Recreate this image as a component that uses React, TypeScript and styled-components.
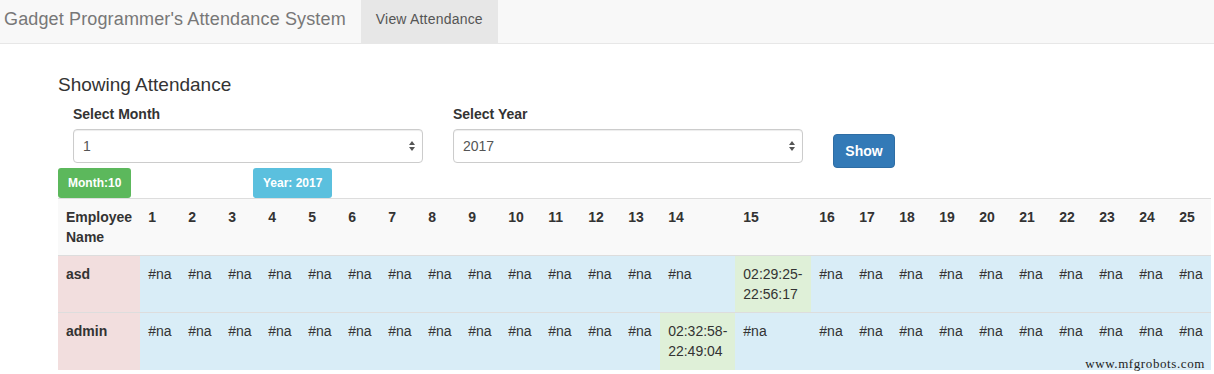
import React from "react";
import styled, { createGlobalStyle } from "styled-components";

const GlobalStyle = createGlobalStyle`
  html, body {
    margin: 0;
    padding: 0;
    background: #fff;
    overflow: hidden;
  }
  body {
    font-family: "Liberation Sans", Helvetica, Arial, sans-serif;
    font-size: 14px;
    line-height: 20px;
    color: #333;
  }
  * { box-sizing: border-box; }
`;

const Page = styled.div`
  position: relative;
  width: 1214px;
  height: 374px;
  overflow: hidden;
`;

const Navbar = styled.nav`
  display: flex;
  height: 44px;
  background: #f8f8f8;
  border-bottom: 1px solid #e7e7e7;
`;

const Brand = styled.div`
  height: 43px;
  line-height: 39px;
  padding: 0 15px 0 4px;
  font-size: 18px;
  letter-spacing: 0.14px;
  color: #777;
  white-space: nowrap;
`;

const NavItem = styled.div<{ $active?: boolean }>`
  height: 43px;
  line-height: 39px;
  padding: 0 15px;
  font-size: 14px;
  letter-spacing: 0.2px;
  color: #555;
  background: ${(p) => (p.$active ? "#e7e7e7" : "transparent")};
`;

const Main = styled.main`
  padding: 31px 3px 0 58px;
`;

const Heading = styled.h4`
  margin: 0;
  font-size: 19px;
  line-height: 20px;
  font-weight: 500;
  color: #333;
`;

const FormRow = styled.div`
  display: flex;
  align-items: flex-start;
  margin-top: 9px;
`;

const Field = styled.div`
  width: 380px;
  padding: 0 15px;
`;

const FieldLabel = styled.label`
  display: block;
  font-weight: 700;
  margin-bottom: 5px;
`;

const SelectBox = styled.div`
  display: flex;
  align-items: center;
  justify-content: space-between;
  height: 34px;
  padding: 0 6px 0 9px;
  border: 1px solid #ccc;
  border-radius: 4px;
  background: #fff;
  box-shadow: inset 0 1px 1px rgba(0, 0, 0, 0.075);
  color: #555;
  font-size: 14px;
`;

const ShowButton = styled.button`
  margin: 30px 0 0 15px;
  height: 34px;
  width: 62px;
  padding: 0;
  border: 1px solid #2e6da4;
  border-radius: 4px;
  background: #337ab7;
  color: #fff;
  font-family: inherit;
  font-size: 14px;
  font-weight: 700;
`;

const BadgeRow = styled.div`
  display: grid;
  grid-template-columns: 195px 195px;
  height: 30px;
`;

const Badge = styled.span<{ $tone: "success" | "info" }>`
  justify-self: start;
  display: inline-flex;
  align-items: center;
  height: 30px;
  padding: 0 10px;
  border-radius: 3px;
  background: ${(p) => (p.$tone === "success" ? "#5cb85c" : "#5bc0de")};
  color: #fff;
  font-size: 12px;
  font-weight: 700;
  white-space: nowrap;
`;

const TableWrap = styled.div`
  overflow: hidden;
`;

const Table = styled.table`
  width: 100%;
  border-collapse: collapse;
  border-spacing: 0;
  border-top: 1px solid #ddd;
`;

const Th = styled.th<{ $w: number }>`
  width: ${(p) => p.$w}px;
  min-width: ${(p) => p.$w}px;
  padding: 8px;
  text-align: left;
  vertical-align: top;
  font-weight: 700;
  line-height: 20px;
  background: #f9f9f9;
  border-bottom: 1px solid #ddd;
`;

const Td = styled.td<{ $tone: "danger" | "info" | "success" }>`
  padding: 8px;
  vertical-align: top;
  line-height: 20px;
  height: 57px;
  border-top: 1px solid #ddd;
  font-weight: ${(p) => (p.$tone === "danger" ? 700 : 400)};
  background: ${(p) =>
    p.$tone === "danger" ? "#f2dede" : p.$tone === "success" ? "#dff0d8" : "#d9edf7"};
`;

const Watermark = styled.div`
  position: absolute;
  right: 9px;
  bottom: 3px;
  font-family: "Liberation Serif", "Times New Roman", serif;
  font-size: 13px;
  letter-spacing: 0.6px;
  line-height: 14px;
  color: #222;
`;

const SelectArrows = () => (
  <svg width="8" height="12" viewBox="0 0 8 12">
    <path d="M4 1 L7 5 L1 5 Z" fill="#555" />
    <path d="M4 11 L7 7 L1 7 Z" fill="#555" />
  </svg>
);

const days = Array.from({ length: 25 }, (_, i) => i + 1);

const rows: { name: string; times: Record<number, [string, string]> }[] = [
  { name: "asd", times: { 15: ["02:29:25-", "22:56:17"] } },
  { name: "admin", times: { 14: ["02:32:58-", "22:49:04"] } },
];

const colWidth = (d: number) => (d === 14 ? 75 : d === 15 ? 76 : 40);

export default function App() {
  return (
    <Page>
      <GlobalStyle />
      <Navbar>
        <Brand>Gadget Programmer's Attendance System</Brand>
        <NavItem $active>View Attendance</NavItem>
      </Navbar>
      <Main>
        <Heading>Showing Attendance</Heading>
        <FormRow>
          <Field>
            <FieldLabel>Select Month</FieldLabel>
            <SelectBox>
              <span>1</span>
              <SelectArrows />
            </SelectBox>
          </Field>
          <Field>
            <FieldLabel>Select Year</FieldLabel>
            <SelectBox>
              <span>2017</span>
              <SelectArrows />
            </SelectBox>
          </Field>
          <ShowButton>Show</ShowButton>
        </FormRow>
        <BadgeRow>
          <Badge $tone="success">Month:10</Badge>
          <Badge $tone="info">Year: 2017</Badge>
        </BadgeRow>
        <TableWrap>
          <Table>
            <thead>
              <tr>
                <Th $w={82}>Employee Name</Th>
                {days.map((d) => (
                  <Th key={d} $w={colWidth(d)}>
                    {d}
                  </Th>
                ))}
              </tr>
            </thead>
            <tbody>
              {rows.map((r) => (
                <tr key={r.name}>
                  <Td $tone="danger">{r.name}</Td>
                  {days.map((d) => {
                    const t = r.times[d];
                    return t ? (
                      <Td key={d} $tone="success">
                        {t[0]}
                        <wbr />
                        {t[1]}
                      </Td>
                    ) : (
                      <Td key={d} $tone="info">
                        #na
                      </Td>
                    );
                  })}
                </tr>
              ))}
            </tbody>
          </Table>
        </TableWrap>
      </Main>
      <Watermark>www.mfgrobots.com</Watermark>
    </Page>
  );
}
